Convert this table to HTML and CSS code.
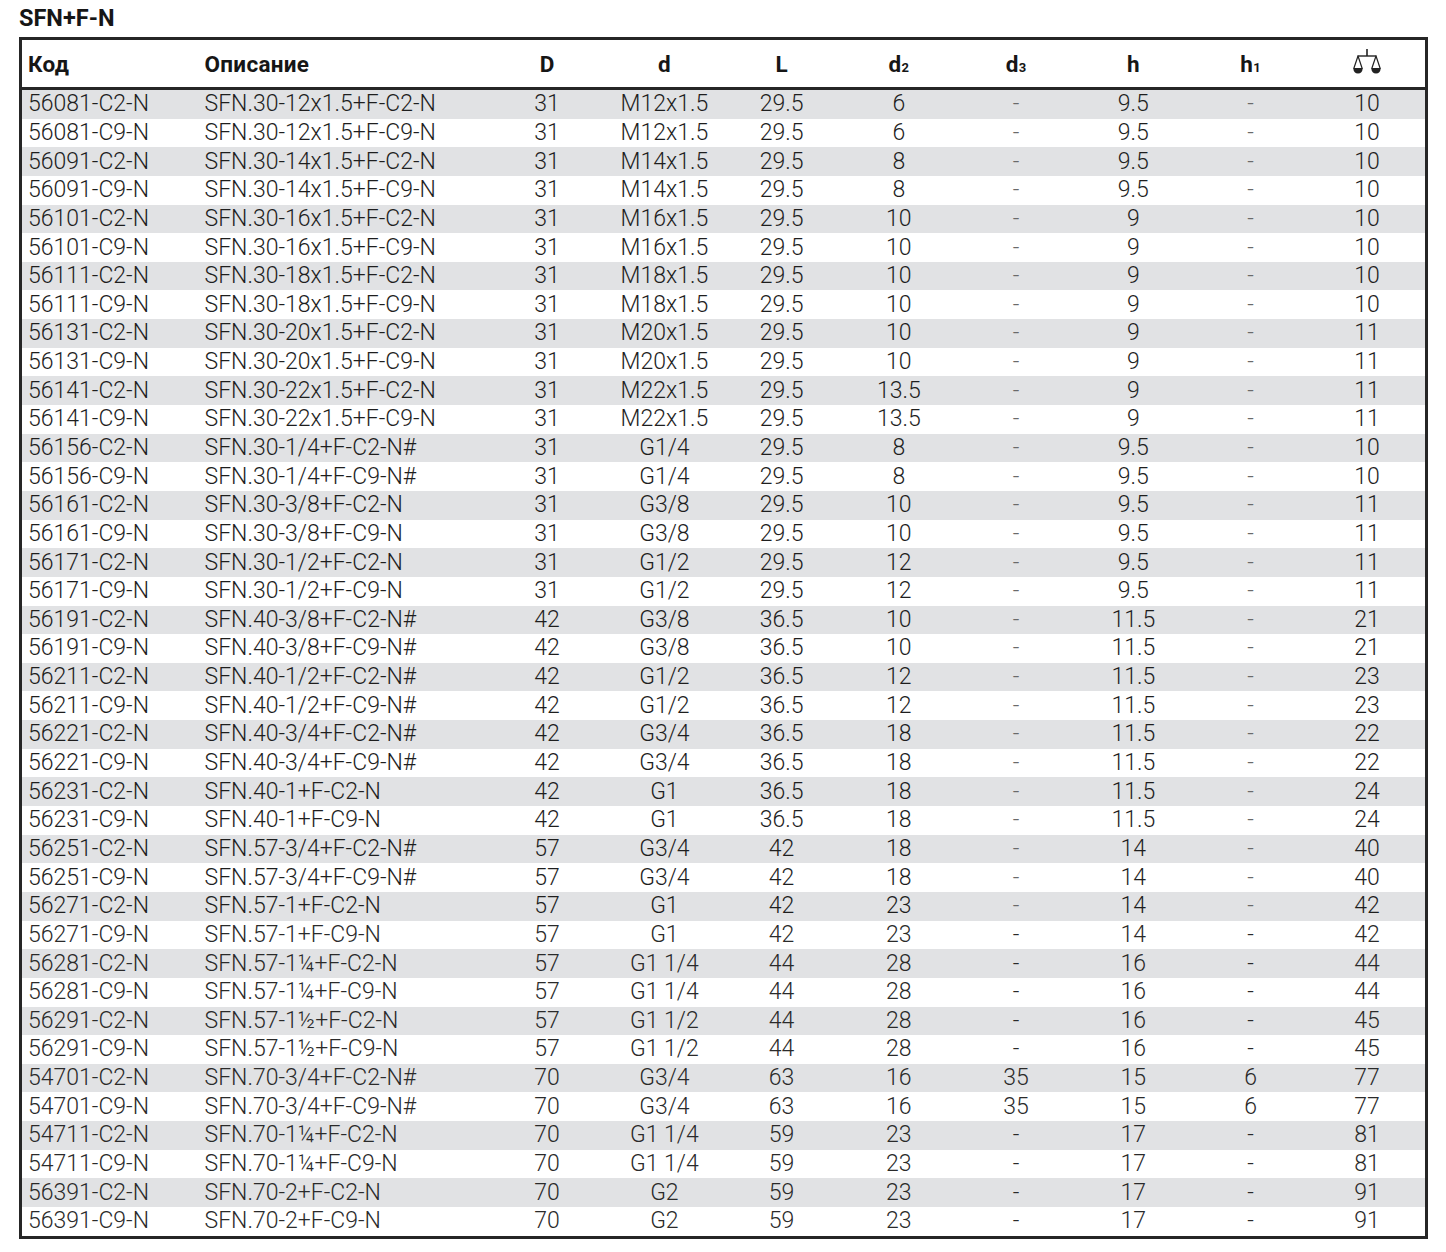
FILE: index.html
```html
<!DOCTYPE html>
<html lang="ru">
<head>
<meta charset="utf-8">
<title>SFN+F-N</title>
<link rel="stylesheet" href="styles.css">
</head>
<body>
<h1 class="title">SFN+F-N</h1>
<table class="spec">
  <colgroup>
    <col class="c-code"><col class="c-desc">
    <col class="c-num"><col class="c-num"><col class="c-num"><col class="c-num">
    <col class="c-num"><col class="c-num"><col class="c-num"><col class="c-num">
  </colgroup>
  <thead>
    <tr>
      <th class="l code">Код</th>
      <th class="l">Описание</th>
      <th>D</th>
      <th>d</th>
      <th>L</th>
      <th>d<span class="sub">2</span></th>
      <th>d<span class="sub">3</span></th>
      <th>h</th>
      <th>h<span class="sub">1</span></th>
      <th>
        <svg class="scale" viewBox="0 0 28 26" width="28" height="26" aria-label="Вес">
          <line x1="14" y1="0" x2="14" y2="7" stroke="#222" stroke-width="1.6"/>
          <line x1="4.5" y1="7" x2="23.5" y2="7" stroke="#222" stroke-width="1.4"/>
          <path d="M5 7 L0.8 19.5 L9.2 19.5 Z" fill="none" stroke="#222" stroke-width="1.2" stroke-linejoin="round"/>
          <path d="M23 7 L18.8 19.5 L27.2 19.5 Z" fill="none" stroke="#222" stroke-width="1.2" stroke-linejoin="round"/>
          <path d="M0.3 19.5 L9.7 19.5 Q9.2 24.5 5 24.5 Q0.8 24.5 0.3 19.5 Z" fill="#222"/>
          <path d="M18.3 19.5 L27.7 19.5 Q27.2 24.5 23 24.5 Q18.8 24.5 18.3 19.5 Z" fill="#222"/>
        </svg>
      </th>
    </tr>
  </thead>
  <tbody>
    <tr><td class="l code">56081-C2-N</td><td class="l">SFN.30-12x1.5+F-C2-N</td><td>31</td><td>M12x1.5</td><td>29.5</td><td>6</td><td class="dash">-</td><td>9.5</td><td class="dash">-</td><td>10</td></tr>
    <tr><td class="l code">56081-C9-N</td><td class="l">SFN.30-12x1.5+F-C9-N</td><td>31</td><td>M12x1.5</td><td>29.5</td><td>6</td><td class="dash">-</td><td>9.5</td><td class="dash">-</td><td>10</td></tr>
    <tr><td class="l code">56091-C2-N</td><td class="l">SFN.30-14x1.5+F-C2-N</td><td>31</td><td>M14x1.5</td><td>29.5</td><td>8</td><td class="dash">-</td><td>9.5</td><td class="dash">-</td><td>10</td></tr>
    <tr><td class="l code">56091-C9-N</td><td class="l">SFN.30-14x1.5+F-C9-N</td><td>31</td><td>M14x1.5</td><td>29.5</td><td>8</td><td class="dash">-</td><td>9.5</td><td class="dash">-</td><td>10</td></tr>
    <tr><td class="l code">56101-C2-N</td><td class="l">SFN.30-16x1.5+F-C2-N</td><td>31</td><td>M16x1.5</td><td>29.5</td><td>10</td><td class="dash">-</td><td>9</td><td class="dash">-</td><td>10</td></tr>
    <tr><td class="l code">56101-C9-N</td><td class="l">SFN.30-16x1.5+F-C9-N</td><td>31</td><td>M16x1.5</td><td>29.5</td><td>10</td><td class="dash">-</td><td>9</td><td class="dash">-</td><td>10</td></tr>
    <tr><td class="l code">56111-C2-N</td><td class="l">SFN.30-18x1.5+F-C2-N</td><td>31</td><td>M18x1.5</td><td>29.5</td><td>10</td><td class="dash">-</td><td>9</td><td class="dash">-</td><td>10</td></tr>
    <tr><td class="l code">56111-C9-N</td><td class="l">SFN.30-18x1.5+F-C9-N</td><td>31</td><td>M18x1.5</td><td>29.5</td><td>10</td><td class="dash">-</td><td>9</td><td class="dash">-</td><td>10</td></tr>
    <tr><td class="l code">56131-C2-N</td><td class="l">SFN.30-20x1.5+F-C2-N</td><td>31</td><td>M20x1.5</td><td>29.5</td><td>10</td><td class="dash">-</td><td>9</td><td class="dash">-</td><td>11</td></tr>
    <tr><td class="l code">56131-C9-N</td><td class="l">SFN.30-20x1.5+F-C9-N</td><td>31</td><td>M20x1.5</td><td>29.5</td><td>10</td><td class="dash">-</td><td>9</td><td class="dash">-</td><td>11</td></tr>
    <tr><td class="l code">56141-C2-N</td><td class="l">SFN.30-22x1.5+F-C2-N</td><td>31</td><td>M22x1.5</td><td>29.5</td><td>13.5</td><td class="dash">-</td><td>9</td><td class="dash">-</td><td>11</td></tr>
    <tr><td class="l code">56141-C9-N</td><td class="l">SFN.30-22x1.5+F-C9-N</td><td>31</td><td>M22x1.5</td><td>29.5</td><td>13.5</td><td class="dash">-</td><td>9</td><td class="dash">-</td><td>11</td></tr>
    <tr><td class="l code">56156-C2-N</td><td class="l">SFN.30-1/4+F-C2-N#</td><td>31</td><td>G1/4</td><td>29.5</td><td>8</td><td class="dash">-</td><td>9.5</td><td class="dash">-</td><td>10</td></tr>
    <tr><td class="l code">56156-C9-N</td><td class="l">SFN.30-1/4+F-C9-N#</td><td>31</td><td>G1/4</td><td>29.5</td><td>8</td><td class="dash">-</td><td>9.5</td><td class="dash">-</td><td>10</td></tr>
    <tr><td class="l code">56161-C2-N</td><td class="l">SFN.30-3/8+F-C2-N</td><td>31</td><td>G3/8</td><td>29.5</td><td>10</td><td class="dash">-</td><td>9.5</td><td class="dash">-</td><td>11</td></tr>
    <tr><td class="l code">56161-C9-N</td><td class="l">SFN.30-3/8+F-C9-N</td><td>31</td><td>G3/8</td><td>29.5</td><td>10</td><td class="dash">-</td><td>9.5</td><td class="dash">-</td><td>11</td></tr>
    <tr><td class="l code">56171-C2-N</td><td class="l">SFN.30-1/2+F-C2-N</td><td>31</td><td>G1/2</td><td>29.5</td><td>12</td><td class="dash">-</td><td>9.5</td><td class="dash">-</td><td>11</td></tr>
    <tr><td class="l code">56171-C9-N</td><td class="l">SFN.30-1/2+F-C9-N</td><td>31</td><td>G1/2</td><td>29.5</td><td>12</td><td class="dash">-</td><td>9.5</td><td class="dash">-</td><td>11</td></tr>
    <tr><td class="l code">56191-C2-N</td><td class="l">SFN.40-3/8+F-C2-N#</td><td>42</td><td>G3/8</td><td>36.5</td><td>10</td><td class="dash">-</td><td>11.5</td><td class="dash">-</td><td>21</td></tr>
    <tr><td class="l code">56191-C9-N</td><td class="l">SFN.40-3/8+F-C9-N#</td><td>42</td><td>G3/8</td><td>36.5</td><td>10</td><td class="dash">-</td><td>11.5</td><td class="dash">-</td><td>21</td></tr>
    <tr><td class="l code">56211-C2-N</td><td class="l">SFN.40-1/2+F-C2-N#</td><td>42</td><td>G1/2</td><td>36.5</td><td>12</td><td class="dash">-</td><td>11.5</td><td class="dash">-</td><td>23</td></tr>
    <tr><td class="l code">56211-C9-N</td><td class="l">SFN.40-1/2+F-C9-N#</td><td>42</td><td>G1/2</td><td>36.5</td><td>12</td><td class="dash">-</td><td>11.5</td><td class="dash">-</td><td>23</td></tr>
    <tr><td class="l code">56221-C2-N</td><td class="l">SFN.40-3/4+F-C2-N#</td><td>42</td><td>G3/4</td><td>36.5</td><td>18</td><td class="dash">-</td><td>11.5</td><td class="dash">-</td><td>22</td></tr>
    <tr><td class="l code">56221-C9-N</td><td class="l">SFN.40-3/4+F-C9-N#</td><td>42</td><td>G3/4</td><td>36.5</td><td>18</td><td class="dash">-</td><td>11.5</td><td class="dash">-</td><td>22</td></tr>
    <tr><td class="l code">56231-C2-N</td><td class="l">SFN.40-1+F-C2-N</td><td>42</td><td>G1</td><td>36.5</td><td>18</td><td class="dash">-</td><td>11.5</td><td class="dash">-</td><td>24</td></tr>
    <tr><td class="l code">56231-C9-N</td><td class="l">SFN.40-1+F-C9-N</td><td>42</td><td>G1</td><td>36.5</td><td>18</td><td class="dash">-</td><td>11.5</td><td class="dash">-</td><td>24</td></tr>
    <tr><td class="l code">56251-C2-N</td><td class="l">SFN.57-3/4+F-C2-N#</td><td>57</td><td>G3/4</td><td>42</td><td>18</td><td class="dash">-</td><td>14</td><td class="dash">-</td><td>40</td></tr>
    <tr><td class="l code">56251-C9-N</td><td class="l">SFN.57-3/4+F-C9-N#</td><td>57</td><td>G3/4</td><td>42</td><td>18</td><td class="dash">-</td><td>14</td><td class="dash">-</td><td>40</td></tr>
    <tr><td class="l code">56271-C2-N</td><td class="l">SFN.57-1+F-C2-N</td><td>57</td><td>G1</td><td>42</td><td>23</td><td class="dash">-</td><td>14</td><td class="dash">-</td><td>42</td></tr>
    <tr class="thin"><td class="l code">56271-C9-N</td><td class="l">SFN.57-1+F-C9-N</td><td>57</td><td>G1</td><td>42</td><td>23</td><td class="dash">-</td><td>14</td><td class="dash">-</td><td>42</td></tr>
    <tr class="thin"><td class="l code">56281-C2-N</td><td class="l">SFN.57-1¼+F-C2-N</td><td>57</td><td>G1 1/4</td><td>44</td><td>28</td><td class="dash">-</td><td>16</td><td class="dash">-</td><td>44</td></tr>
    <tr class="thin"><td class="l code">56281-C9-N</td><td class="l">SFN.57-1¼+F-C9-N</td><td>57</td><td>G1 1/4</td><td>44</td><td>28</td><td class="dash">-</td><td>16</td><td class="dash">-</td><td>44</td></tr>
    <tr class="thin"><td class="l code">56291-C2-N</td><td class="l">SFN.57-1½+F-C2-N</td><td>57</td><td>G1 1/2</td><td>44</td><td>28</td><td class="dash">-</td><td>16</td><td class="dash">-</td><td>45</td></tr>
    <tr class="thin"><td class="l code">56291-C9-N</td><td class="l">SFN.57-1½+F-C9-N</td><td>57</td><td>G1 1/2</td><td>44</td><td>28</td><td class="dash">-</td><td>16</td><td class="dash">-</td><td>45</td></tr>
    <tr class="thin"><td class="l code">54701-C2-N</td><td class="l">SFN.70-3/4+F-C2-N#</td><td>70</td><td>G3/4</td><td>63</td><td>16</td><td>35</td><td>15</td><td>6</td><td>77</td></tr>
    <tr class="thin"><td class="l code">54701-C9-N</td><td class="l">SFN.70-3/4+F-C9-N#</td><td>70</td><td>G3/4</td><td>63</td><td>16</td><td>35</td><td>15</td><td>6</td><td>77</td></tr>
    <tr class="thin"><td class="l code">54711-C2-N</td><td class="l">SFN.70-1¼+F-C2-N</td><td>70</td><td>G1 1/4</td><td>59</td><td>23</td><td class="dash">-</td><td>17</td><td class="dash">-</td><td>81</td></tr>
    <tr class="thin"><td class="l code">54711-C9-N</td><td class="l">SFN.70-1¼+F-C9-N</td><td>70</td><td>G1 1/4</td><td>59</td><td>23</td><td class="dash">-</td><td>17</td><td class="dash">-</td><td>81</td></tr>
    <tr class="thin"><td class="l code">56391-C2-N</td><td class="l">SFN.70-2+F-C2-N</td><td>70</td><td>G2</td><td>59</td><td>23</td><td class="dash">-</td><td>17</td><td class="dash">-</td><td>91</td></tr>
    <tr class="thin"><td class="l code">56391-C9-N</td><td class="l">SFN.70-2+F-C9-N</td><td>70</td><td>G2</td><td>59</td><td>23</td><td class="dash">-</td><td>17</td><td class="dash">-</td><td>91</td></tr>
  </tbody>
</table>
</body>
</html>
```

FILE: styles.css
```css
html, body {
  margin: 0;
  padding: 0;
  background: #ffffff;
}

body {
  padding: 5px 0 0 19px;
  font-family: Roboto, "Liberation Sans", sans-serif;
  color: #1e1e1e;
}

.title {
  margin: 0 0 6px 0;
  font-size: 23.5px;
  line-height: 26px;
  font-weight: 700;
  color: #161616;
}

.spec {
  width: 1406px;
  border-collapse: collapse;
  table-layout: fixed;
  border: 3px solid #262626;
}

.c-code { width: 176px; }
.c-desc { width: 292px; }
.c-num  { width: 117.25px; }

.spec th {
  height: 47px;
  padding: 0;
  font-size: 22.5px;
  letter-spacing: 0.3px;
  font-weight: 700;
  text-align: center;
  vertical-align: middle;
  background: #ffffff;
  color: #161616;
  border-bottom: 3px solid #262626;
}

.spec th.l,
.spec td.l {
  text-align: left;
  padding-left: 8px;
}

.spec th.code,
.spec td.code {
  padding-left: 6px;
}

.sub {
  font-size: 13px;
  vertical-align: baseline;
}

.scale {
  display: block;
  margin: -4px auto 0;
}

.spec td {
  height: 28.65px;
  padding: 0;
  font-size: 23px;
  font-weight: 300;
  line-height: 28px;
  text-align: center;
  white-space: nowrap;
  color: #1e1e1e;
}

.spec tbody tr:nth-child(odd) td {
  background: #e1e2e4;
}

.spec td.dash {
  color: #6a6a6a;
}

.spec tr.thin td {
  color: #2a2a2a;
}
```
